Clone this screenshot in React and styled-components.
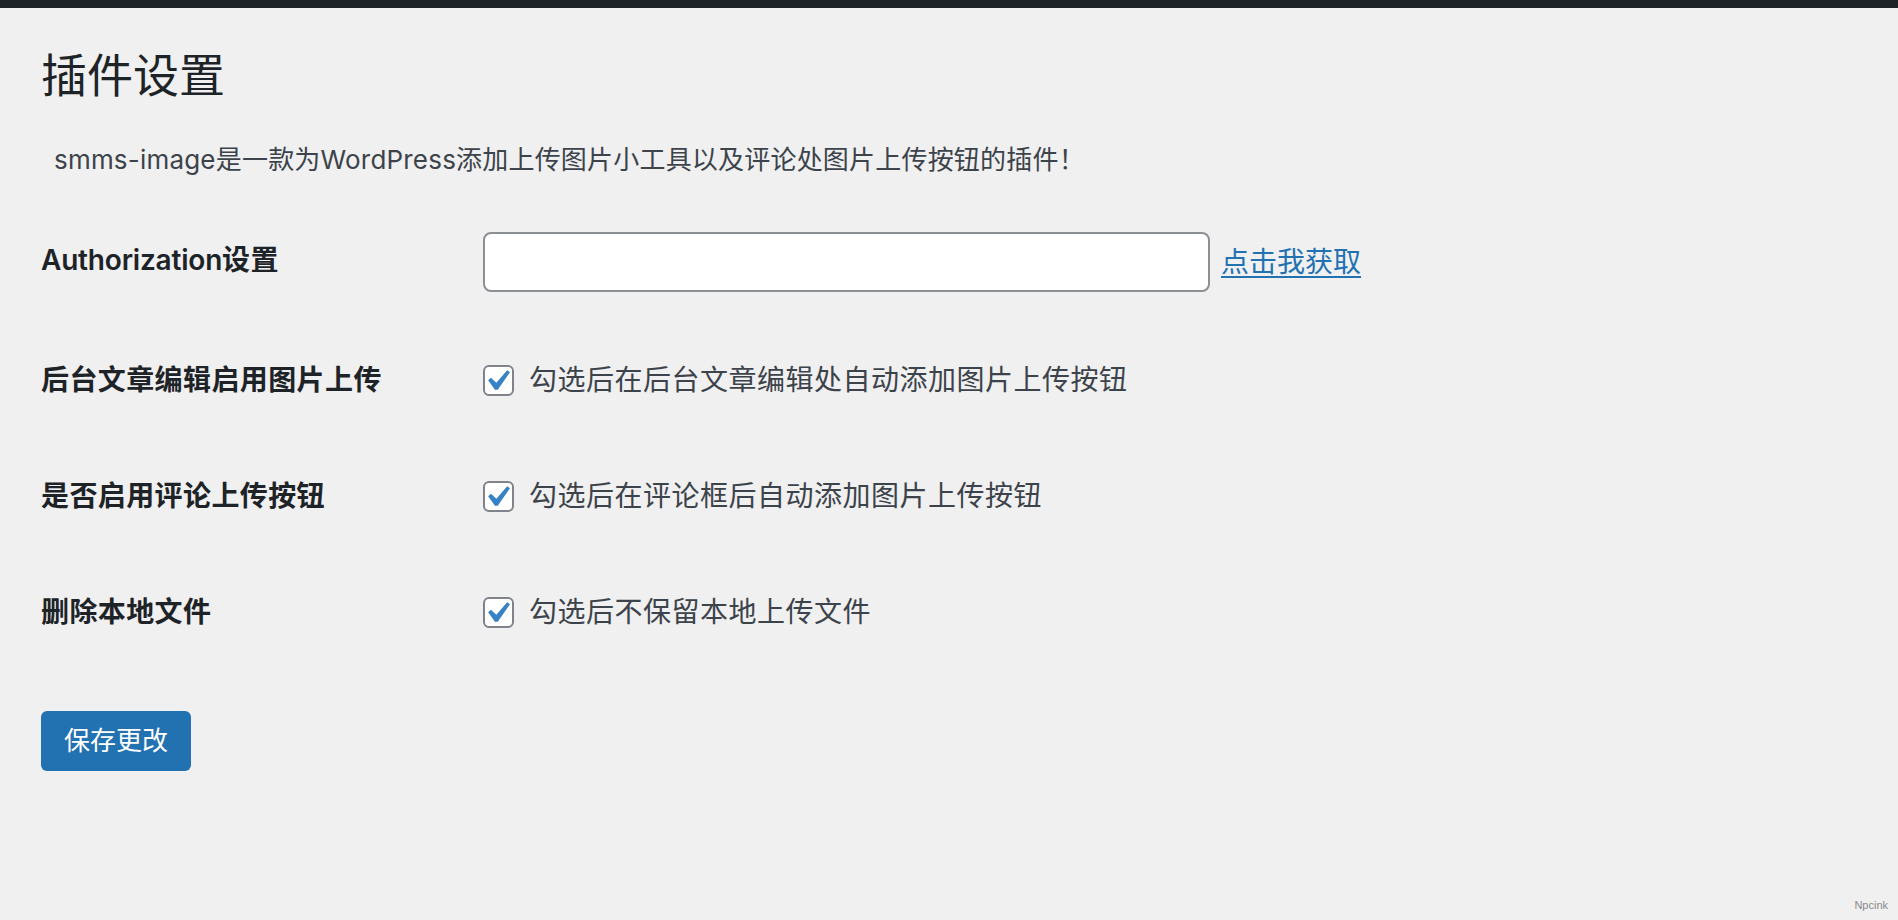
import React from "react";
import styled, { createGlobalStyle } from "styled-components";

const GlobalStyle = createGlobalStyle`
  html, body {
    margin: 0;
    padding: 0;
    background: #f0f0f1;
  }
  body {
    font-family: Inter, "Noto Sans CJK SC", "Noto Sans", sans-serif;
    color: #3c434a;
  }
  * { box-sizing: border-box; }
`;

const Page = styled.div`
  min-height: 920px;
  position: relative;
  background: #f0f0f1;
`;

const TopBar = styled.div`
  height: 8px;
  background: #1d2327;
`;

const Wrap = styled.div`
  padding: 0 41px;
`;

const Title = styled.h1`
  margin: 37px 0 0;
  font-size: 46px;
  line-height: 60px;
  font-weight: 400;
  color: #1d2327;
`;

const Description = styled.p`
  margin: 35px 0 0;
  padding-left: 13px;
  font-size: 26px;
  line-height: 39px;
  letter-spacing: 0.2px;
  color: #3c434a;
`;

const Form = styled.div`
  margin-top: 23px;
  display: grid;
  grid-template-columns: 442px 1fr;
`;

const Label = styled.div`
  padding-top: 40px;
  height: ${(p) => p.$h}px;
  font-size: 28px;
  line-height: 36px;
  font-weight: 600;
  letter-spacing: 0.4px;
  color: #1d2327;
`;

const Latin = styled.span`
  letter-spacing: -0.2px;
`;

const Field = styled.div`
  height: ${(p) => p.$h}px;
  padding-top: ${(p) => p.$pt}px;
  display: flex;
  align-items: flex-start;
  font-size: 28px;
  color: #3c434a;
`;

const TextInput = styled.input`
  width: 727px;
  height: 60px;
  margin: 0;
  padding: 0 16px;
  border: 2px solid #8c8f94;
  border-radius: 8px;
  background: #fff;
  font-size: 28px;
  font-family: inherit;
  outline: none;
`;

const Link = styled.a`
  margin: 12px 0 0 11px;
  color: #2271b1;
  font-size: 28px;
  line-height: 36px;
  text-decoration: underline;
  text-underline-offset: 4px;
  text-decoration-thickness: 2px;
  cursor: pointer;
`;

const CheckLabel = styled.label`
  display: flex;
  align-items: center;
  font-size: 28px;
  line-height: 36px;
  letter-spacing: 0.5px;
  color: #3c434a;
`;

const Box = styled.span`
  position: relative;
  flex: none;
  width: 31px;
  height: 31px;
  margin-right: 15px;
  border: 2px solid #80848a;
  border-radius: 6px;
  background: #fff;
`;

const Tick = styled.svg`
  position: absolute;
  top: -7px;
  left: -9px;
  width: 42px;
  height: 42px;
`;

const Submit = styled.div`
  margin-top: 41px;
`;

const Button = styled.button`
  height: 60px;
  min-width: 150px;
  padding: 0 23px;
  border: none;
  border-radius: 6px;
  background: #2271b1;
  color: #fff;
  font-family: inherit;
  font-size: 26px;
  line-height: 60px;
  cursor: pointer;
`;

const Watermark = styled.div`
  position: absolute;
  right: 10px;
  bottom: 9px;
  font-family: "Liberation Sans", Arial, sans-serif;
  font-size: 11px;
  color: #8a8a8a;
`;

function Checkbox({ text }) {
  return (
    <CheckLabel>
      <Box>
        <Tick viewBox="0 0 20 20">
          <path
            d="M14.83 4.89l1.34.94-5.81 8.38H9.02L5.78 9.67l1.34-1.25 2.57 2.4z"
            fill="#3582c4"
          />
        </Tick>
      </Box>
      {text}
    </CheckLabel>
  );
}

const rows = [
  { label: "后台文章编辑启用图片上传", text: "勾选后在后台文章编辑处自动添加图片上传按钮" },
  { label: "是否启用评论上传按钮", text: "勾选后在评论框后自动添加图片上传按钮" },
  { label: "删除本地文件", text: "勾选后不保留本地上传文件" },
];

export default function App() {
  return (
    <>
      <GlobalStyle />
      <Page>
        <TopBar />
        <Wrap>
          <Title>插件设置</Title>
          <Description>smms-image是一款为WordPress添加上传图片小工具以及评论处图片上传按钮的插件！</Description>
          <Form>
            <Label $h={120}>
              <Latin>Authorization</Latin>设置
            </Label>
            <Field $h={120} $pt={30}>
              <TextInput type="text" />
              <Link>点击我获取</Link>
            </Field>
            {rows.map((r) => (
              <React.Fragment key={r.label}>
                <Label $h={116}>{r.label}</Label>
                <Field $h={116} $pt={40}>
                  <Checkbox text={r.text} />
                </Field>
              </React.Fragment>
            ))}
          </Form>
          <Submit>
            <Button>保存更改</Button>
          </Submit>
        </Wrap>
        <Watermark>Npcink</Watermark>
      </Page>
    </>
  );
}
